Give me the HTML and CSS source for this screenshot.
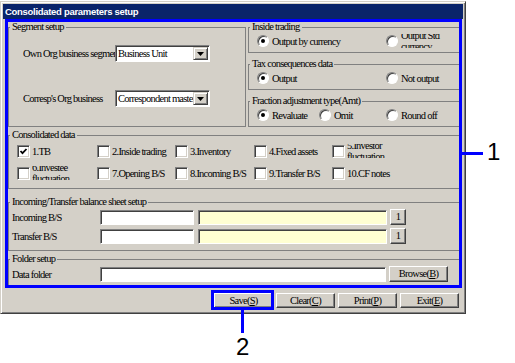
FILE: index.html
```html
<!DOCTYPE html>
<html lang="en">
<head>
    <meta charset="UTF-8">
    <title>Consolidated parameters setup</title>
    <link rel="stylesheet" href="styles.css">
</head>
<body>
    <div class="page">
        <div class="window">
            <div class="titlebar">Consolidated parameters setup</div>
            <div class="body">
                <div class="top">
                    <fieldset class="group segment">
                        <legend>Segment setup</legend>
                        <div class="seg-row first">
                            <span class="seg-label">Own Org business segment</span>
                            <div class="combo">
                                <span class="combo-text">Business Unit</span>
                                <span class="combo-btn"><svg width="7" height="4" viewBox="0 0 7 4"><polygon points="0,0 7,0 3.5,4" fill="#000"/></svg></span>
                            </div>
                        </div>
                        <div class="seg-row second">
                            <span class="seg-label">Corresp's Org business</span>
                            <div class="combo">
                                <span class="combo-text">Correspondent master setup</span>
                                <span class="combo-btn"><svg width="7" height="4" viewBox="0 0 7 4"><polygon points="0,0 7,0 3.5,4" fill="#000"/></svg></span>
                            </div>
                        </div>
                    </fieldset>

                    <div class="right-col">
                        <fieldset class="group">
                            <legend>Inside trading</legend>
                            <div class="radios">
                                <label class="opt span2"><span class="radio checked"></span>Output by currency</label>
                                <label class="opt"><span class="radio"></span><span class="wrap-text">Output Std currency</span></label>
                            </div>
                        </fieldset>
                        <fieldset class="group">
                            <legend>Tax consequences data</legend>
                            <div class="radios">
                                <label class="opt span2"><span class="radio checked"></span>Output</label>
                                <label class="opt"><span class="radio"></span>Not output</label>
                            </div>
                        </fieldset>
                        <fieldset class="group">
                            <legend>Fraction adjustment type(Amt)</legend>
                            <div class="radios">
                                <label class="opt"><span class="radio checked"></span>Revaluate</label>
                                <label class="opt"><span class="radio"></span>Omit</label>
                                <label class="opt"><span class="radio"></span>Round off</label>
                            </div>
                        </fieldset>
                    </div>
                </div>

                <fieldset class="group consolidated">
                    <legend>Consolidated data</legend>
                    <div class="checks">
                        <label class="opt"><span class="check checked"><svg width="9" height="9" viewBox="0 0 9 9"><polyline points="1.5,4 3.5,6.2 7.5,2" fill="none" stroke="#000" stroke-width="1.8"/></svg></span>1.TB</label>
                        <label class="opt"><span class="check"></span>2.Inside trading</label>
                        <label class="opt"><span class="check"></span>3.Inventory</label>
                        <label class="opt"><span class="check"></span>4.Fixed assets</label>
                        <label class="opt"><span class="check"></span><span class="wrap-text">5.Investor fluctuation</span></label>
                        <label class="opt"><span class="check"></span><span class="wrap-text">6.Investee fluctuation</span></label>
                        <label class="opt"><span class="check"></span>7.Opening B/S</label>
                        <label class="opt"><span class="check"></span>8.Incoming B/S</label>
                        <label class="opt"><span class="check"></span>9.Transfer B/S</label>
                        <label class="opt"><span class="check"></span>10.CF notes</label>
                    </div>
                </fieldset>

                <fieldset class="group incoming">
                    <legend>Incoming/Transfer balance sheet setup</legend>
                    <div class="field-row">
                        <span class="field-label">Incoming B/S</span>
                        <input class="field code" type="text">
                        <input class="field name" type="text" readonly>
                        <button class="btn small" type="button">1</button>
                    </div>
                    <div class="field-row">
                        <span class="field-label">Transfer B/S</span>
                        <input class="field code" type="text">
                        <input class="field name" type="text" readonly>
                        <button class="btn small" type="button">1</button>
                    </div>
                </fieldset>

                <fieldset class="group folder">
                    <legend>Folder setup</legend>
                    <div class="field-row">
                        <span class="field-label">Data folder</span>
                        <input class="field path" type="text">
                        <button class="btn browse" type="button">Browse(<u>B</u>)</button>
                    </div>
                </fieldset>
            </div>

            <div class="buttons">
                <button class="btn" type="button">Save(<u>S</u>)</button>
                <button class="btn" type="button">Clear(<u>C</u>)</button>
                <button class="btn" type="button">Print(<u>P</u>)</button>
                <button class="btn" type="button">Exit(<u>E</u>)</button>
            </div>
        </div>

        <div class="hl hl-main"></div>
        <div class="hl hl-save"></div>
        <div class="lead lead-1"></div>
        <div class="lead lead-2"></div>
        <span class="num num-1">1</span>
        <span class="num num-2">2</span>
    </div>
</body>
</html>
```

FILE: styles.css
```css
body {
    margin: 0;
    background: #fff;
    font-family: "Liberation Serif", serif;
    font-size: 10.5px;
    letter-spacing: -0.75px;
    color: #000;
}

.page {
    position: relative;
    width: 515px;
    height: 363px;
}

.window {
    width: 460px;
    margin-top: 1px;
    padding: 2px;
    background: #d4d0c8;
    border: 1px solid;
    border-color: #d4d0c8 #404040 #404040 #d4d0c8;
    box-shadow: inset 1px 1px #fff, inset -1px -1px #808080;
}

.titlebar {
    height: 15px;
    line-height: 15px;
    padding-left: 2px;
    background: #0a246a;
    color: #fff;
    font-family: "Liberation Sans", sans-serif;
    font-weight: bold;
    font-size: 9.5px;
    letter-spacing: -0.3px;
}

.body {
    padding: 2px 3px 0 5px;
}

/* group boxes */
fieldset.group {
    margin: 0;
    padding: 0;
    min-width: 0;
    border: 1px solid #808080;
}

    fieldset.group legend {
        margin-left: 1px;
        padding: 0 2px;
        line-height: 12px;
    }

.top {
    display: grid;
    grid-template-columns: 238px 1fr;
    column-gap: 2px;
}

.right-col {
    display: flex;
    flex-direction: column;
    gap: 5px;
}

/* segment setup */
.seg-row {
    display: flex;
    align-items: center;
    padding-left: 14px;
    height: 17px;
}

    .seg-row.first {
        margin-top: 12px;
    }

    .seg-row.second {
        margin-top: 28px;
    }

.seg-label {
    width: 92px;
    overflow: hidden;
    white-space: nowrap;
}

.combo {
    display: flex;
    width: 95px;
    height: 17px;
    box-sizing: border-box;
    background: #fff;
    border: 1px solid;
    border-color: #808080 #fff #fff #808080;
    box-shadow: inset 1px 1px #404040;
    padding: 1px 1px 1px 2px;
}

.combo-text {
    flex: 1;
    overflow: hidden;
    white-space: nowrap;
    line-height: 13px;
}

.combo-btn {
    display: flex;
    align-items: center;
    justify-content: center;
    width: 15px;
    height: 13px;
    box-sizing: border-box;
    background: #d4d0c8;
    border: 1px solid;
    border-color: #d4d0c8 #404040 #404040 #d4d0c8;
    box-shadow: inset 1px 1px #fff, inset -1px -1px #808080;
}

/* radios and checks */
.radios {
    display: grid;
    grid-template-columns: 62px 67px 1fr;
    margin: 1px 0 4px;
    padding-left: 8px;
}

    .radios .span2 {
        grid-column: span 2;
    }

.opt {
    display: flex;
    align-items: center;
    height: 14px;
    white-space: nowrap;
}

.radio {
    position: relative;
    flex: none;
    width: 12px;
    height: 12px;
    box-sizing: border-box;
    margin-right: 3px;
    border-radius: 50%;
    background: #fff;
    border: 1px solid;
    border-color: #808080 #fff #fff #808080;
    box-shadow: inset 1px 1px #404040;
}

    .radio.checked::after {
        content: "";
        position: absolute;
        left: 3px;
        top: 3px;
        width: 4px;
        height: 4px;
        border-radius: 50%;
        background: #000;
    }

.wrap-text {
    display: flex;
    align-items: center;
    width: 50px;
    height: 14px;
    overflow: hidden;
    white-space: normal;
    line-height: 11px;
}

fieldset.group.consolidated {
    margin-top: 2px;
}

.checks {
    display: grid;
    grid-template-columns: 80px 78px 79px 78px 1fr;
    row-gap: 8px;
    margin: 3px 0 8px;
    padding-left: 8px;
}

.check {
    display: flex;
    align-items: center;
    justify-content: center;
    flex: none;
    width: 13px;
    height: 13px;
    box-sizing: border-box;
    margin-right: 2px;
    background: #fff;
    border: 1px solid;
    border-color: #808080 #fff #fff #808080;
    box-shadow: inset 1px 1px #404040, inset -1px -1px #d4d0c8;
}

/* text fields */
fieldset.group.incoming {
    margin-top: 7px;
    padding-bottom: 6px;
}

fieldset.group.folder {
    margin-top: 2px;
    padding-bottom: 3px;
}

.field-row {
    display: flex;
    align-items: center;
    height: 16px;
    margin-top: 1px;
    padding-left: 3px;
}

    .field-row + .field-row {
        margin-top: 3px;
    }

.field-label {
    width: 88px;
}

.field {
    height: 15px;
    box-sizing: border-box;
    margin: 0;
    padding: 0 2px;
    font: inherit;
    background: #fff;
    border: 1px solid;
    border-color: #808080 #fff #fff #808080;
    box-shadow: inset 1px 1px #404040;
    outline: none;
}

    .field.code {
        width: 94px;
        margin-right: 4px;
    }

    .field.name {
        width: 189px;
        margin-right: 3px;
        background: #ffffd2;
    }

    .field.path {
        width: 286px;
        margin-right: 3px;
    }

/* buttons */
.btn {
    height: 15px;
    box-sizing: border-box;
    margin: 0;
    padding: 0;
    font: inherit;
    letter-spacing: inherit;
    line-height: 12px;
    color: #000;
    background: #d4d0c8;
    border: 1px solid;
    border-color: #fff #404040 #404040 #fff;
    box-shadow: inset -1px -1px #808080;
}

    .btn.small {
        width: 16px;
        height: 16px;
    }

    .btn.browse {
        width: 59px;
        height: 16px;
    }

.buttons {
    display: flex;
    justify-content: flex-end;
    gap: 3px;
    margin-top: 7px;
    padding: 0 4px 3px 0;
}

    .buttons .btn {
        width: 59px;
    }

/* annotation overlays */
.hl {
    position: absolute;
    box-sizing: border-box;
    border: 3px solid #0000ff;
}

.hl-main {
    left: 5px;
    top: 18px;
    width: 457px;
    height: 269px;
}

.hl-save {
    left: 211px;
    top: 289px;
    width: 63px;
    height: 20px;
}

.lead {
    position: absolute;
    background: #0000ff;
}

.lead-1 {
    left: 462px;
    top: 151px;
    width: 21px;
    height: 3px;
}

.lead-2 {
    left: 241px;
    top: 309px;
    width: 3px;
    height: 23px;
}

.num {
    position: absolute;
    font-family: "Liberation Sans", sans-serif;
    font-size: 24px;
    line-height: 24px;
    letter-spacing: 0;
}

.num-1 {
    left: 487px;
    top: 139px;
}

.num-2 {
    left: 236px;
    top: 334px;
}
```
